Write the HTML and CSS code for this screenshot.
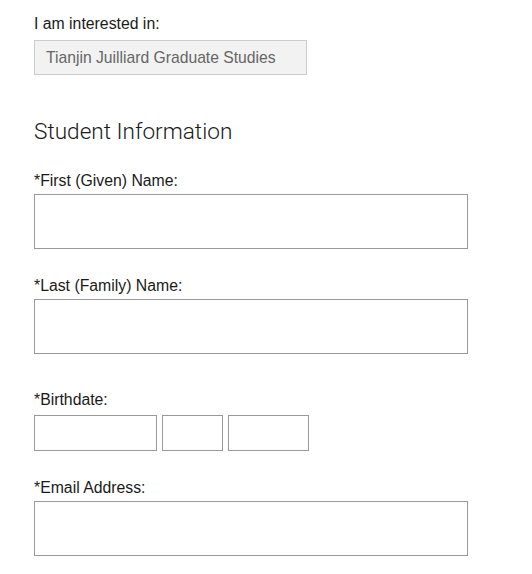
FILE: index.html
```html
<!DOCTYPE html>
<html>
<head>
<meta charset="utf-8">
<link rel="stylesheet" href="styles.css">
</head>
<body>
<form class="form">
  <div class="field interest">
    <label class="label">I am interested in:</label>
    <div class="readonly">Tianjin Juilliard Graduate Studies</div>
  </div>
  <h2 class="heading">Student Information</h2>
  <div class="field">
    <label class="label">*First (Given) Name:</label>
    <input class="input" type="text">
  </div>
  <div class="field">
    <label class="label">*Last (Family) Name:</label>
    <input class="input" type="text">
  </div>
  <div class="field birth">
    <label class="label">*Birthdate:</label>
    <div class="date-row">
      <input class="date d1" type="text">
      <input class="date d2" type="text">
      <input class="date d3" type="text">
    </div>
  </div>
  <div class="field">
    <label class="label">*Email Address:</label>
    <input class="input" type="text">
  </div>
</form>
</body>
</html>
```
FILE: styles.css
```css
html, body {
  margin: 0;
  padding: 0;
  background: #fff;
}
body {
  font-family: "Liberation Sans", Arial, sans-serif;
  color: #1a1a1a;
}
.form {
  padding: 15px 34px 0 34px;
  display: flex;
  flex-direction: column;
}
.field {
  display: flex;
  flex-direction: column;
  margin-bottom: 28px;
}
.label {
  display: block;
  font-size: 15.8px;
  line-height: 18px;
  margin-bottom: 4px;
}
.interest .label {
  margin-bottom: 7px;
}
.interest {
  margin-bottom: 44px;
}
.readonly {
  box-sizing: border-box;
  width: 273px;
  height: 35px;
  border: 1px solid #ccc;
  background: #f2f2f2;
  color: #666;
  font-size: 15.7px;
  line-height: 33px;
  padding-left: 11px;
}
.heading {
  margin: 0 0 27px 0;
  font-size: 22.6px;
  line-height: 26px;
  font-family: "Roboto", "Liberation Sans", sans-serif;
  font-weight: 300;
  color: #1a1a1a;
}
.input {
  box-sizing: border-box;
  width: 434px;
  height: 55px;
  border: 1px solid #999;
  margin: 0;
  padding: 0;
  background: #fff;
}
.birth {
  margin-top: 9px;
}
.birth .label {
  margin-bottom: 6px;
}
.date-row {
  display: flex;
  gap: 5px;
}
.date {
  box-sizing: border-box;
  height: 36px;
  border: 1px solid #999;
  margin: 0;
  padding: 0;
  background: #fff;
}
.d1 { width: 123px; }
.d2 { width: 61px; }
.d3 { width: 81px; }
```
